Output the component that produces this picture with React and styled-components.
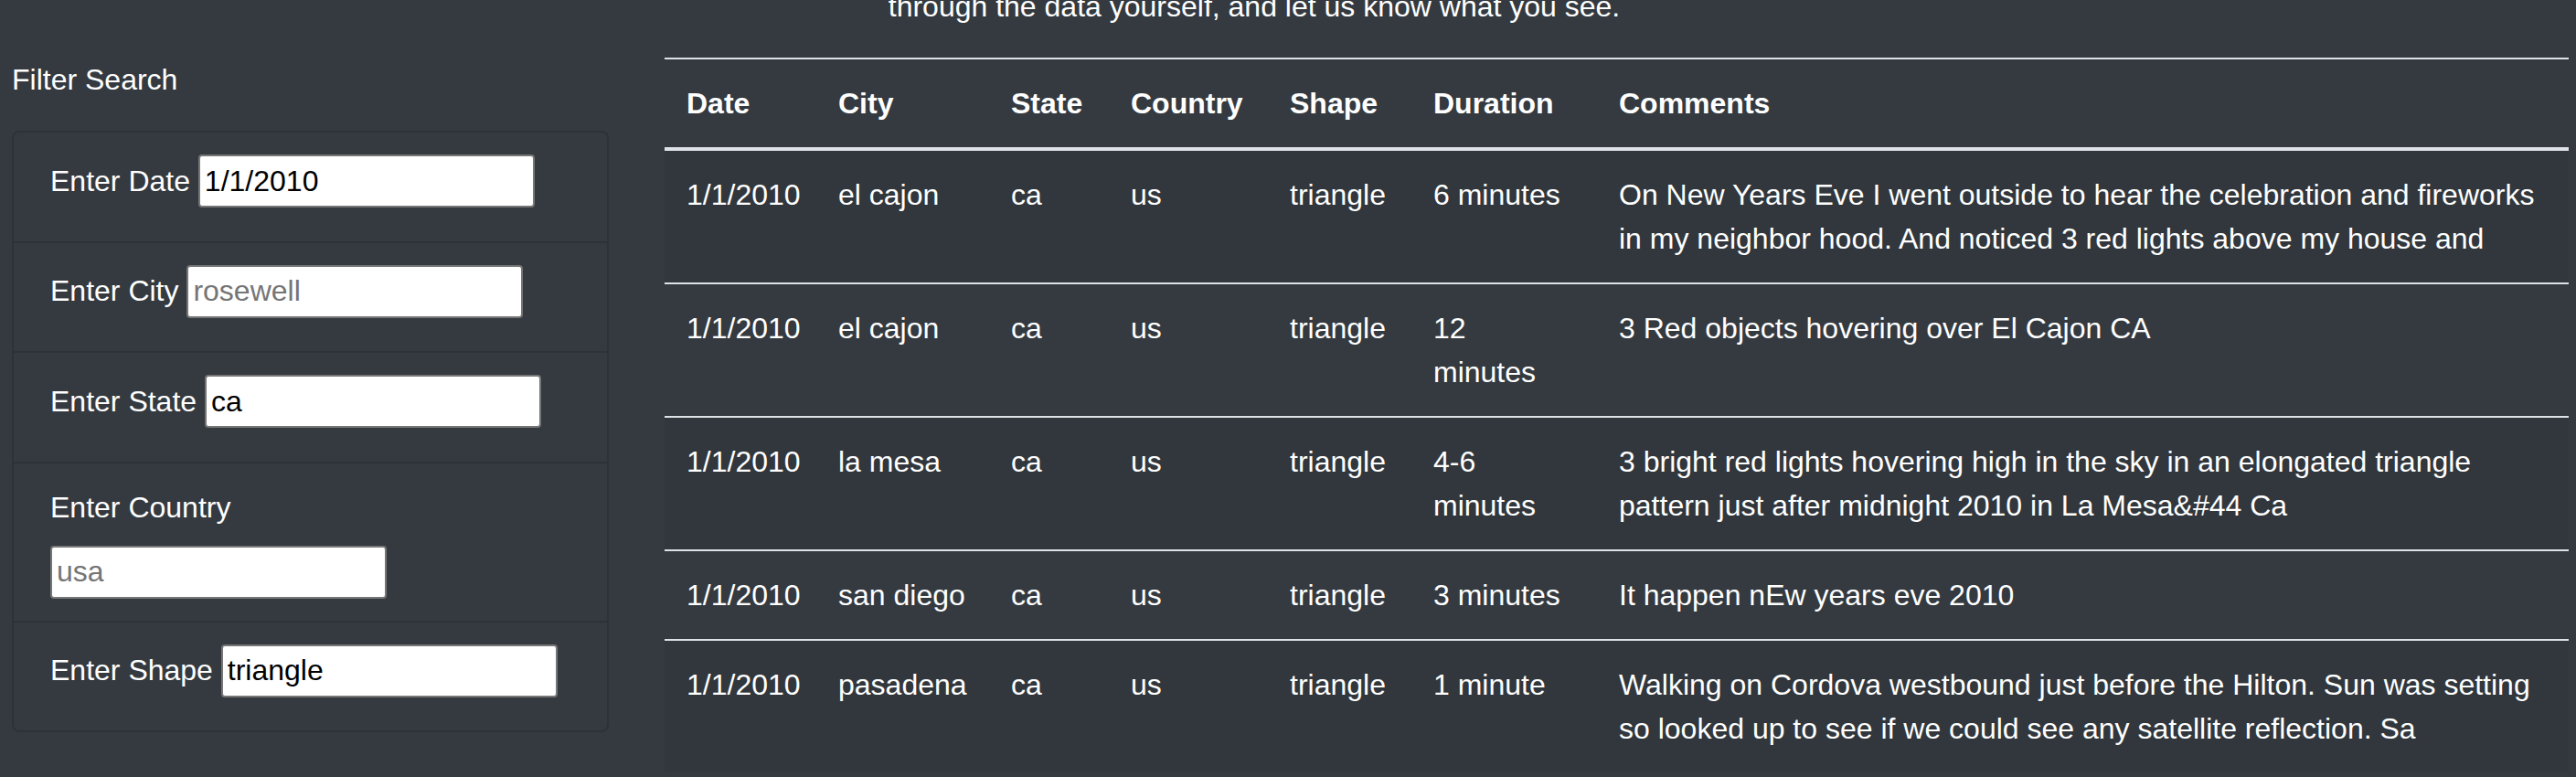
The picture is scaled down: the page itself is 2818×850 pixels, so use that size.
import styled, { createGlobalStyle } from "styled-components";

//  //  //  GLOBAL   //  //  //

const GlobalStyle = createGlobalStyle`
  html, body {
    margin: 0;
    padding: 0;
    background: #343a40;
  }
  body {
    color: #fff;
    font-family: "Liberation Sans", Arial, sans-serif;
    font-size: 32px;
    line-height: 1.5;
    overflow: hidden;
  }
  * {
    box-sizing: border-box;
  }
`;

//  //  //  STYLED-COMPONENTS   //  //  //

const Page = styled.div`
  width: 2818px;
  height: 850px;
  overflow: hidden;
`;

const Intro = styled.p`
  margin: -17px 0 32px;
  padding-right: 74px;
  text-align: center;
`;

const Layout = styled.div`
  display: flex;
  align-items: flex-start;
  gap: 61px;
  padding: 0 8px 0 13px;
`;

const Sidebar = styled.aside`
  flex: 0 0 653px;
`;

const SideTitle = styled.p`
  margin: 0 0 32px;
`;

const Card = styled.div`
  border: 2px solid rgba(0, 0, 0, 0.125);
  border-radius: 8px;
  background: #343a40;
`;

const FilterList = styled.ul`
  list-style: none;
  margin: 0;
  padding: 0;
`;

const FilterItem = styled.li`
  padding: 24px 40px;
  border-bottom: 2px solid rgba(0, 0, 0, 0.125);

  &:last-child {
    border-bottom: 0;
  }
`;

const Label = styled.label`
  display: inline-block;
  margin-bottom: 18px;
`;

const Input = styled.input`
  display: inline-block;
  width: 368px;
  height: 58px;
  padding: 0 5px;
  border: 2px solid #767676;
  border-radius: 4px;
  background: #fff;
  color: #000;
  font-family: inherit;
  font-size: 32px;
  line-height: 48px;
  vertical-align: baseline;

  &::placeholder {
    color: #757575;
  }
`;

const TableWrap = styled.main`
  flex: 1;
  min-width: 0;
`;

const Table = styled.table`
  width: 100%;
  table-layout: fixed;
  border-collapse: collapse;
  color: #fff;
`;

const Th = styled.th`
  width: ${(p) => (p.$w ? `${p.$w}px` : "auto")};
  padding: 24px;
  border-top: 2px solid #dee2e6;
  border-bottom: 4px solid #dee2e6;
  text-align: left;
  vertical-align: bottom;
  font-weight: bold;
`;

const Tr = styled.tr`
  &:nth-of-type(odd) {
    background: rgba(0, 0, 0, 0.05);
  }
`;

const Td = styled.td`
  padding: 24px;
  border-top: 2px solid #dee2e6;
  vertical-align: top;
`;

//  //  //  DATA   //  //  //

const filters = [
  { id: "date", label: "Enter Date", value: "1/1/2010", placeholder: "1/11/2011" },
  { id: "city", label: "Enter City", value: "", placeholder: "rosewell" },
  { id: "state", label: "Enter State", value: "ca", placeholder: "ca" },
  { id: "country", label: "Enter Country", value: "", placeholder: "usa" },
  { id: "shape", label: "Enter Shape", value: "triangle", placeholder: "circle" },
];

const columns = [
  { key: "datetime", title: "Date", w: 166 },
  { key: "city", title: "City", w: 189 },
  { key: "state", title: "State", w: 131 },
  { key: "country", title: "Country", w: 174 },
  { key: "shape", title: "Shape", w: 157 },
  { key: "durationMinutes", title: "Duration", w: 203 },
  { key: "comments", title: "Comments" },
];

const sightings = [
  {
    datetime: "1/1/2010",
    city: "el cajon",
    state: "ca",
    country: "us",
    shape: "triangle",
    durationMinutes: "6 minutes",
    comments:
      "On New Years Eve I went outside to hear the celebration and fireworks in my neighbor hood. And noticed 3 red lights above my house and",
  },
  {
    datetime: "1/1/2010",
    city: "el cajon",
    state: "ca",
    country: "us",
    shape: "triangle",
    durationMinutes: "12 minutes",
    comments: "3 Red objects hovering over El Cajon CA",
  },
  {
    datetime: "1/1/2010",
    city: "la mesa",
    state: "ca",
    country: "us",
    shape: "triangle",
    durationMinutes: "4-6 minutes",
    comments:
      "3 bright red lights hovering high in the sky in an elongated triangle pattern just after midnight 2010 in La Mesa&#44 Ca",
  },
  {
    datetime: "1/1/2010",
    city: "san diego",
    state: "ca",
    country: "us",
    shape: "triangle",
    durationMinutes: "3 minutes",
    comments: "It happen nEw years eve 2010",
  },
  {
    datetime: "1/1/2010",
    city: "pasadena",
    state: "ca",
    country: "us",
    shape: "triangle",
    durationMinutes: "1 minute",
    comments:
      "Walking on Cordova westbound just before the Hilton. Sun was setting so looked up to see if we could see any satellite reflection. Sa",
  },
];

//  //  //  FUNCTION    //  //  //

export default function App() {
  return (
    <>
      <GlobalStyle />
      <Page>
        <Intro>through the data yourself, and let us know what you see.</Intro>
        <Layout>
          <Sidebar>
            <SideTitle>Filter Search</SideTitle>
            <Card>
              <FilterList>
                {filters.map((f) => (
                  <FilterItem key={f.id}>
                    <Label htmlFor={f.id}>{f.label}</Label>{" "}
                    <Input
                      id={f.id}
                      type="text"
                      defaultValue={f.value}
                      placeholder={f.value ? undefined : f.placeholder}
                    />
                  </FilterItem>
                ))}
              </FilterList>
            </Card>
          </Sidebar>
          <TableWrap>
            <Table>
              <thead>
                <tr>
                  {columns.map((c) => (
                    <Th key={c.key} $w={c.w}>
                      {c.title}
                    </Th>
                  ))}
                </tr>
              </thead>
              <tbody>
                {sightings.map((s, i) => (
                  <Tr key={i}>
                    {columns.map((c) => (
                      <Td key={c.key}>{s[c.key]}</Td>
                    ))}
                  </Tr>
                ))}
              </tbody>
            </Table>
          </TableWrap>
        </Layout>
      </Page>
    </>
  );
}
